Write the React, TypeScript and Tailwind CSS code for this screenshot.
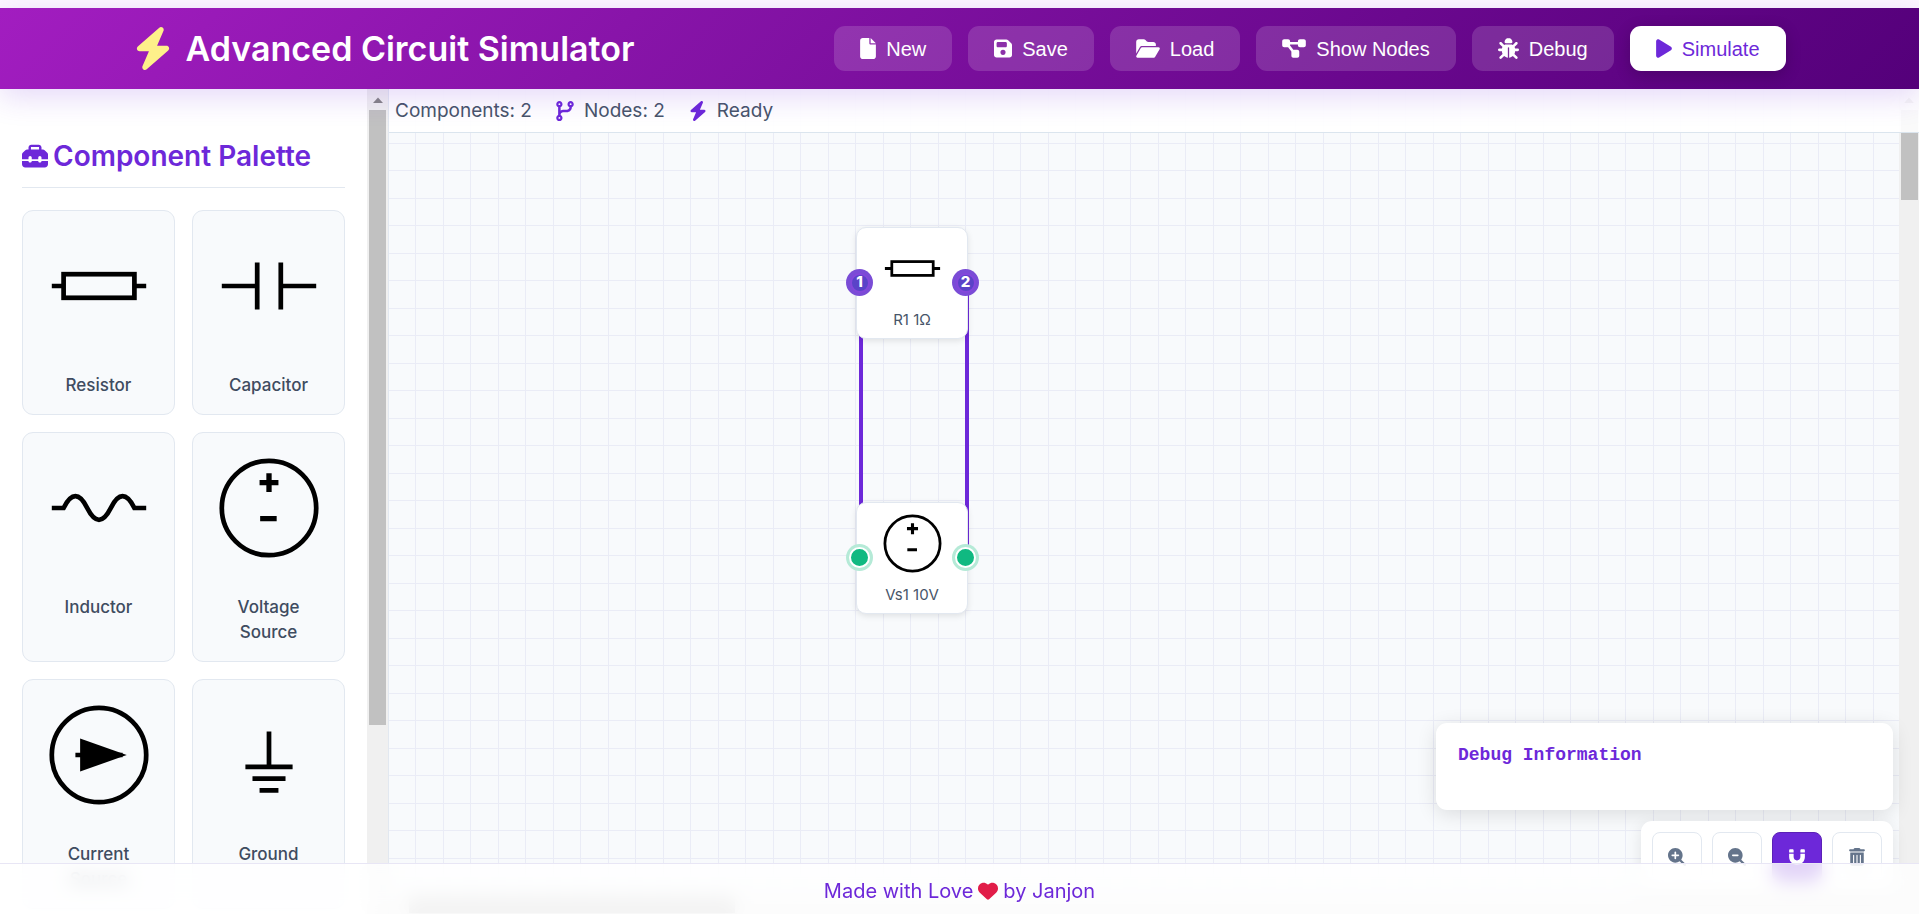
import { useState } from "react";
import type { ReactNode } from "react";
import {
  FaBug,
  FaCodeBranch,
  FaDiagramProject,
  FaFolderOpen,
  FaHeart,
  FaMagnet,
  FaMagnifyingGlassMinus,
  FaMagnifyingGlassPlus,
  FaToolbox,
  FaTrashCan,
} from "react-icons/fa6";

type SymbolName = "resistor" | "capacitor" | "inductor" | "voltage" | "current" | "ground";

const symbols: Record<SymbolName, ReactNode> = {
  resistor: (
    <>
      <path d="M10 50H20M80 50H90" />
      <rect x="20" y="40" width="60" height="20" />
    </>
  ),
  capacitor: <path d="M10 50H40M40 30V70M60 30V70M60 50H90" />,
  inductor: <path d="M10 50H20Q30 30 40 50T60 50T80 50H90" />,
  voltage: (
    <>
      <circle cx="50" cy="50" r="40" />
      <path d="M42 28.500H58M50 20.500V36.500M42.500 59H56.500" strokeWidth="4.500" />
    </>
  ),
  current: (
    <>
      <circle cx="50" cy="50" r="40" />
      <path d="M30 50H70" />
      <path d="M34 36L73.500 50L34 64Z" fill="currentColor" stroke="none" />
    </>
  ),
  ground: <path d="M50 30V60M30 60H70M36 70H64M42 80H58" />,
};

function CircuitSymbol({ name, className }: { name: SymbolName; className: string }) {
  return (
    <svg
      viewBox="0 0 100 100"
      fill="none"
      stroke="currentColor"
      strokeWidth="4"
      className={className}
      aria-hidden="true"
    >
      {symbols[name]}
    </svg>
  );
}

type IconProps = { className: string };

function BoltIcon({ className }: IconProps) {
  return (
    <svg viewBox="0 0 448 512" fill="currentColor" className={className} aria-hidden="true">
      <path d="M349.400 44.600c5.900-13.700 1.500-29.700-10.600-38.500s-28.600-8-39.900 1.800l-256 224c-10 8.800-13.600 22.900-8.900 35.300S50.700 288 64 288H175.500L98.600 467.400c-5.900 13.700-1.500 29.700 10.600 38.500s28.600 8 39.900-1.800l256-224c10-8.800 13.600-22.900 8.900-35.300s-16.600-20.700-30-20.700H272.500L349.400 44.600z" />
    </svg>
  );
}

function FileIcon({ className }: IconProps) {
  return (
    <svg viewBox="0 0 384 512" fill="currentColor" className={className} aria-hidden="true">
      <path d="M0 64C0 28.700 28.700 0 64 0H224V128c0 17.700 14.300 32 32 32H384V448c0 35.300-28.700 64-64 64H64c-35.300 0-64-28.700-64-64V64zm384 64H256V0L384 128z" />
    </svg>
  );
}

function SaveIcon({ className }: IconProps) {
  return (
    <svg viewBox="0 0 448 512" fill="currentColor" className={className} aria-hidden="true">
      <path d="M64 32C28.700 32 0 60.700 0 96V416c0 35.300 28.700 64 64 64H384c35.300 0 64-28.700 64-64V173.300c0-17-6.700-33.300-18.700-45.300L352 50.700C340 38.700 323.700 32 306.700 32H64zm0 96c0-17.700 14.300-32 32-32H288c17.700 0 32 14.300 32 32v64c0 17.700-14.300 32-32 32H96c-17.700 0-32-14.300-32-32V128zM224 288a64 64 0 1 1 0 128 64 64 0 1 1 0-128z" />
    </svg>
  );
}

function PlayIcon({ className }: IconProps) {
  return (
    <svg viewBox="0 0 384 512" fill="currentColor" className={className} aria-hidden="true">
      <path d="M73 39c-14.800-9.100-33.400-9.400-48.500-.9S0 62.600 0 80V432c0 17.400 9.400 33.400 24.500 41.900s33.700 8.100 48.500-.9L361 297c14.300-8.700 23-24.200 23-41s-8.700-32.200-23-41L73 39z" />
    </svg>
  );
}

const palette: { name: SymbolName; label: string }[] = [
  { name: "resistor", label: "Resistor" },
  { name: "capacitor", label: "Capacitor" },
  { name: "inductor", label: "Inductor" },
  { name: "voltage", label: "Voltage Source" },
  { name: "current", label: "Current Source" },
  { name: "ground", label: "Ground" },
];

const actions: { icon: ReactNode; label: string }[] = [
  { icon: <FileIcon className="h-[21px] w-4" />, label: "New" },
  { icon: <SaveIcon className="h-[21px] w-[18px]" />, label: "Save" },
  { icon: <FaFolderOpen className="h-[21px] w-6" />, label: "Load" },
  { icon: <FaDiagramProject className="h-[21px] w-6" />, label: "Show Nodes" },
  { icon: <FaBug className="h-[21px] w-[21px]" />, label: "Debug" },
];

function Header() {
  return (
    <header className="relative z-20 bg-linear-135 from-[#a21dc0] to-[#54007a] px-6 py-[18px] shadow-[0_8px_30px_rgba(109,40,217,0.18)]">
      <div className="mx-auto flex w-full max-w-[1652px] items-center justify-between">
        <div className="flex items-center gap-[14px]">
          <BoltIcon className="-my-2 h-[43px] w-[38px] text-[#fef08a]" />
          <h1 className="text-[34px] leading-[45px] font-semibold text-white">
            Advanced Circuit Simulator
          </h1>
        </div>
        <nav className="flex gap-4 font-['Liberation_Sans',sans-serif] text-[20px]" aria-label="Circuit actions">
          {actions.map(({ icon, label }) => (
            <button
              key={label}
              type="button"
              className="flex h-[45px] items-center gap-[10px] rounded-[11px] bg-white/15 px-[26px] text-white"
            >
              {icon}
              {label}
            </button>
          ))}
          <button
            type="button"
            className="flex h-[45px] items-center gap-[10px] rounded-[11px] bg-white px-[26px] text-[#6d28d9] shadow-[0_4px_16px_rgba(0,0,0,0.2)]"
          >
            <PlayIcon className="h-[21px] w-4" />
            Simulate
          </button>
        </nav>
      </div>
    </header>
  );
}

function Sidebar() {
  return (
    <aside className="relative z-10 flex w-[389px] shrink-0 overflow-hidden border-r border-[#e2e8f0] bg-white">
      <div className="min-w-0 flex-1 px-[22px] pt-[50px]">
        <h2 className="flex items-center gap-[5px] border-b border-[#e2e8f0] pb-[14px] text-[28px] leading-[34px] font-semibold whitespace-nowrap text-[#6d28d9]">
          <FaToolbox className="size-[26px]" />
          Component Palette
        </h2>
        <ul className="mt-[22px] grid grid-cols-2 gap-[17px]">
          {palette.map(({ name, label }) => (
            <li key={name} className="flex">
              <button
                type="button"
                className="flex w-full flex-col items-center rounded-[11px] border border-[#e2e8f0] bg-[#f8fafc] p-4 text-center text-[17px] leading-[25px] font-medium text-[#3f4c60]"
              >
                <CircuitSymbol name={name} className="mb-7 size-[118px] text-black" />
                <span className="max-w-[100px]">{label}</span>
              </button>
            </li>
          ))}
        </ul>
      </div>
      <div className="flex w-[21px] flex-col items-center bg-[#f0f0f0]" aria-hidden="true">
        <svg viewBox="0 0 20 21" className="h-[21px] w-5 fill-[#858585]">
          <path d="M10 8.500L15 14H5Z" />
        </svg>
        <div className="h-[615px] w-[17px] bg-[#c1c1c1]" />
      </div>
    </aside>
  );
}

function StatusBar() {
  return (
    <div className="absolute inset-x-0 top-0 z-10 flex h-11 items-center gap-6 border-b border-[#dbe5ee] bg-white/92 px-[6px] pt-px text-[19px] text-[#475569]">
      <span>Components: 2</span>
      <span className="flex items-center gap-[10px]">
        <FaCodeBranch className="h-5 w-[18px] text-[#6d28d9]" />
        Nodes: 2
      </span>
      <span className="flex items-center gap-[10px]">
        <BoltIcon className="h-5 w-[18px] text-[#6d28d9]" />
        Ready
      </span>
    </div>
  );
}

function CanvasPart({ symbol, label, className }: { symbol: SymbolName; label: string; className: string }) {
  return (
    <div
      className={`absolute left-[467px] flex size-[112px] flex-col items-center justify-between rounded-[10px] border border-[#e2e8f0] bg-white pt-[6px] pb-2 text-black shadow-[0_2px_6px_rgba(0,0,0,0.1)] ${className}`}
    >
      <CircuitSymbol name={symbol} className="size-[69px]" />
      <span className="text-[15px] leading-5 text-[#475569]">{label}</span>
    </div>
  );
}

function NodeMarker({ id, className }: { id: number; className: string }) {
  return (
    <span
      className={`absolute flex size-[27px] items-center justify-center rounded-full bg-[#7a4cd6] ${className}`}
    >
      <span className="flex size-5 items-center justify-center rounded-full border-2 border-[#8447db] bg-[#5a43c8] text-[15px] font-extrabold text-white">
        {id}
      </span>
    </span>
  );
}

function Terminal({ className }: { className: string }) {
  return (
    <span className={`absolute size-[27px] rounded-full bg-[#b5ead7] p-[3px] ${className}`}>
      <span className="block size-full rounded-full border-2 border-white bg-[#10b981]" />
    </span>
  );
}

const toolButton =
  "flex size-[50px] items-center justify-center rounded-[8px] border border-[#e2e8f0] bg-white text-[#64748b]";

function Tools() {
  const [snap, setSnap] = useState(true);
  return (
    <div className="flex gap-[10px] rounded-[11px] bg-white p-[11px] shadow-[0_4px_16px_rgba(0,0,0,0.1)]">
      <button type="button" aria-label="Zoom in" className={toolButton}>
        <FaMagnifyingGlassPlus className="size-[18px]" />
      </button>
      <button type="button" aria-label="Zoom out" className={toolButton}>
        <FaMagnifyingGlassMinus className="size-[18px]" />
      </button>
      <button
        type="button"
        aria-label="Snap to grid"
        aria-pressed={snap}
        onClick={() => setSnap(!snap)}
        className={
          snap
            ? "flex size-[50px] items-center justify-center rounded-[8px] border border-[#5b21b6] bg-[#6d28d9] text-white"
            : toolButton
        }
      >
        <FaMagnet className="size-[18px]" />
      </button>
      <button type="button" aria-label="Clear canvas" className={toolButton}>
        <FaTrashCan className="size-[18px]" />
      </button>
    </div>
  );
}

function Workspace() {
  return (
    <main className="relative flex min-w-0 flex-1 flex-col overflow-hidden bg-[#f8fafc]">
      <StatusBar />
      <div className="flex min-h-0 flex-1">
        <div className="relative min-w-0 flex-1 overflow-hidden bg-[linear-gradient(to_right,#eaecf6_1px,transparent_1px,transparent_27px,#eaecf6_27px,#eaecf6_28px,transparent_28px),linear-gradient(to_bottom,#eaecf6_1px,transparent_1px,transparent_27px,#eaecf6_27px,#eaecf6_28px,transparent_28px)] bg-size-[55px_55px] bg-position-[-1px_-1px]">
          <svg className="absolute top-0 left-0 h-[500px] w-[600px]" aria-hidden="true">
            <path d="M472 193V469M578 193V469" stroke="#6d28d9" strokeWidth="4" />
          </svg>
          <CanvasPart symbol="resistor" label="R1 1Ω" className="top-[138px]" />
          <CanvasPart symbol="voltage" label="Vs1 10V" className="top-[413px]" />
          <NodeMarker id={1} className="top-[180px] left-[457px]" />
          <NodeMarker id={2} className="top-[180px] left-[563px]" />
          <Terminal className="top-[455px] left-[457px]" />
          <Terminal className="top-[455px] left-[563px]" />
        </div>
        <div className="flex w-5 flex-col items-center bg-[#f0f0f0]" aria-hidden="true">
          <svg viewBox="0 0 20 21" className="h-[21px] w-5 shrink-0 fill-[#858585]">
            <path d="M10 8.500L15 14H5Z" />
          </svg>
          <div className="h-[90px] w-[17px] bg-[#c1c1c1]" />
        </div>
      </div>
      <div className="flex h-5 items-center bg-[#f0f0f0] pl-5" aria-hidden="true">
        <div className="h-[17px] w-[326px] bg-[#c1c1c1]" />
      </div>
      <div className="absolute right-[26px] bottom-[21px] flex flex-col items-end gap-[11px]">
        <section className="h-[87px] w-[457px] rounded-[11px] bg-white px-[22px] pt-[20px] shadow-[0_4px_20px_rgba(0,0,0,0.12)]">
          <h3 className="font-['Liberation_Mono',monospace] text-[18px] leading-6 font-bold text-[#6d28d9]">
            Debug Information
          </h3>
        </section>
        <Tools />
      </div>
    </main>
  );
}

function Footer() {
  return (
    <footer className="fixed inset-x-0 bottom-0 z-30 flex h-[51px] items-center justify-center gap-[5px] border-t border-[#e8e6f5] bg-white/80 pt-1 text-[20px] text-[#6d28d9] backdrop-blur-[9px]">
      <span>Made with Love</span>
      <FaHeart className="size-5 text-[#e11d48]" />
      <span>by Janjon</span>
    </footer>
  );
}

export default function App() {
  return (
    <div className="flex h-screen flex-col overflow-hidden bg-[#fdf7ff] pt-2 font-['Inter',sans-serif]">
      <Header />
      <div className="flex min-h-0 flex-1">
        <Sidebar />
        <Workspace />
      </div>
      <Footer />
    </div>
  );
}
